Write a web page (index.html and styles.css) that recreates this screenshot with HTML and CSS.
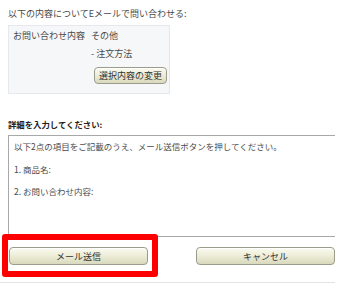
FILE: index.html
```html
<!DOCTYPE html>
<html lang="ja">
<head>
<meta charset="utf-8">
<link rel="stylesheet" href="styles.css">
</head>
<body>
<div class="page">
  <p class="intro">以下の内容についてEメールで問い合わせる:</p>
  <div class="summary">
    <div class="row">
      <span class="label">お問い合わせ内容</span>
      <div class="values">
        <span>その他</span>
        <span>- 注文方法</span>
        <button class="btn btn-small" type="button">選択内容の変更</button>
      </div>
    </div>
  </div>
  <p class="detail-title">詳細を入力してください:</p>
  <div class="textarea">
    <p>以下2点の項目をご記載のうえ、メール送信ボタンを押してください。</p>
    <p>1. 商品名:</p>
    <p>2. お問い合わせ内容:</p>
  </div>
  <div class="actions">
    <div class="highlight"></div>
    <button class="btn btn-wide" type="button">メール送信</button>
    <button class="btn btn-wide" type="button">キャンセル</button>
  </div>
  <div class="separator"></div>
</div>
</body>
</html>
```

FILE: styles.css
```css
html, body {
  margin: 0;
  padding: 0;
  background: #ffffff;
}
body {
  font-family: "Noto Sans CJK JP", "Noto Sans", sans-serif;
  font-size: 9px;
  color: #4a4a4a;
  width: 340px;
  height: 292px;
  overflow: hidden;
}
.page {
  padding: 7px 0 0 8px;
}
.intro {
  margin: 0;
  line-height: 14px;
}
.summary {
  margin-top: 4px;
  width: 160px;
  height: 67px;
  background: #f6f7f9;
  border: 1px solid #e6e8eb;
  box-sizing: content-box;
}
.row {
  display: flex;
  padding: 3px 0 0 4px;
}
.label {
  width: 78px;
  line-height: 14px;
}
.values {
  display: flex;
  flex-direction: column;
  align-items: flex-start;
  line-height: 14px;
}
.values span + span {
  margin-top: 4px;
}
.btn {
  font-family: "Noto Sans CJK JP", "Noto Sans", sans-serif;
  font-size: 9px;
  color: #333;
  border: 1px solid #9c9c8c;
  border-radius: 4px;
  background: linear-gradient(#fbfbf0, #e9e9d2 60%, #d9d9bd);
  padding: 0;
  line-height: 15px;
  box-shadow: inset 0 1px 0 #ffffff;
}
.btn-small {
  margin-top: 6px;
  margin-left: 3px;
  width: 73px;
  height: 17px;
}
.detail-title {
  margin: 23px 0 0 0;
  font-size: 8.4px;
  font-weight: bold;
  line-height: 14px;
  color: #222;
}
.textarea {
  margin-top: 4px;
  width: 327px;
  height: 102px;
  border: 1px solid #a8a8a8;
  border-right: none;
  padding: 3px 0 0 5px;
  box-sizing: border-box;
}
.textarea p {
  margin: 0 0 8px 0;
  font-size: 8.5px;
  line-height: 14px;
  color: #4a4a4a;
}
.textarea p:first-child {
  margin-bottom: 9px;
}
.actions {
  position: relative;
  display: flex;
  justify-content: space-between;
  width: 326px;
  margin-top: 10px;
  padding-left: 1px;
}
.btn-wide {
  width: 139px;
  height: 18px;
  position: relative;
}
.highlight {
  position: absolute;
  left: -6px;
  top: -13px;
  width: 144px;
  height: 31px;
  border: 6px solid #ff0000;
  border-radius: 3px;
}
.separator {
  margin-top: 17px;
  margin-left: -8px;
  width: 335px;
  height: 1px;
  background: #e4e4e4;
}
```
